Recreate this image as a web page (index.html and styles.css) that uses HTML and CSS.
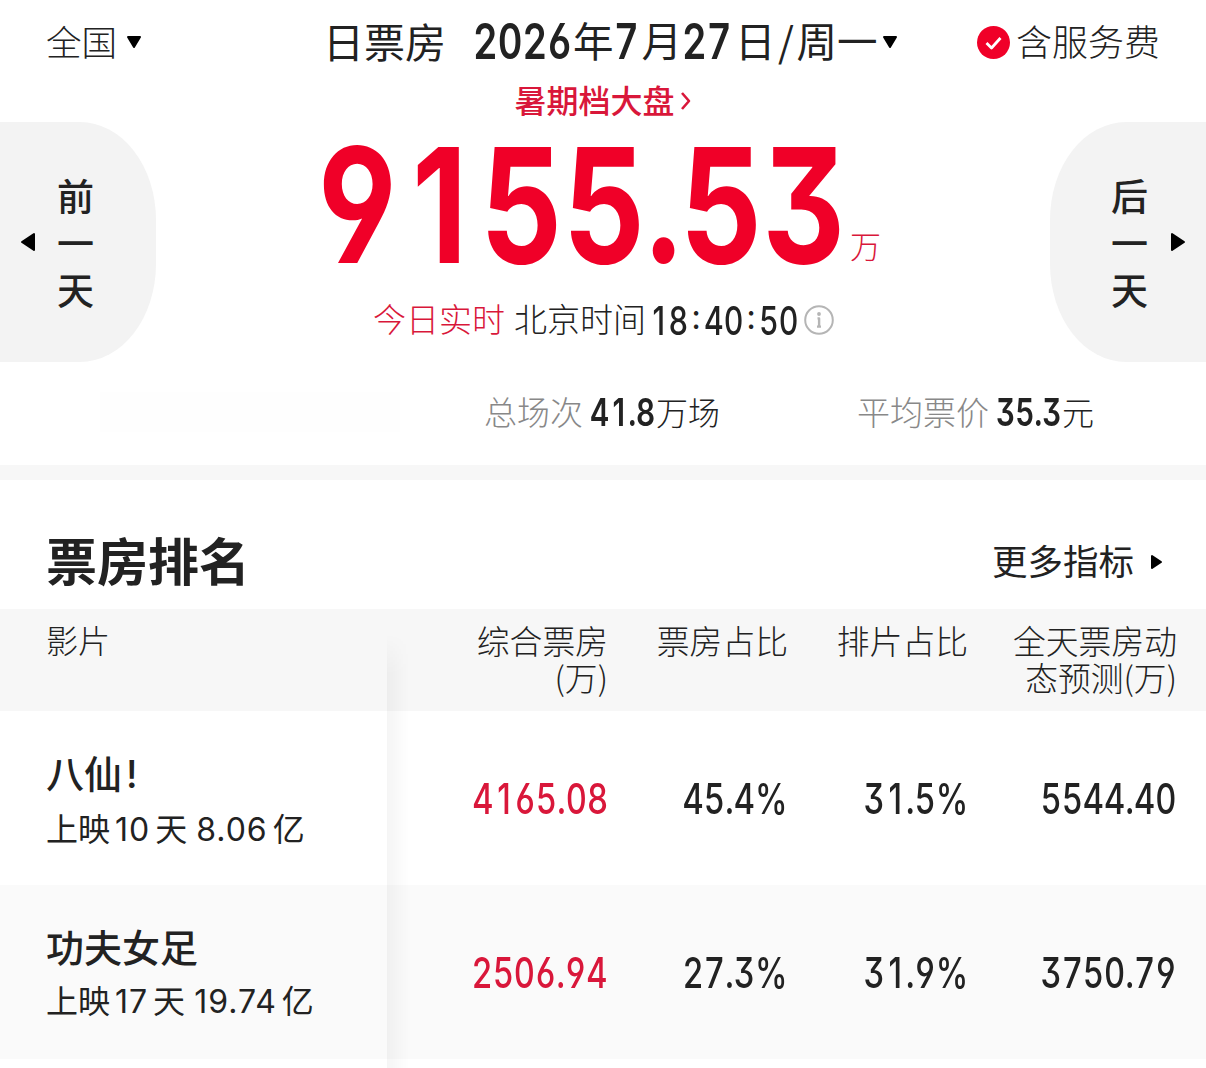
FILE: index.html
```html
<!DOCTYPE html>
<html lang="zh-CN">
<head>
  <meta charset="UTF-8">
  <meta name="viewport" content="width=device-width, initial-scale=1.0">
  <title>日票房</title>
  <link rel="stylesheet" href="styles.css">
</head>
<body>
  <header class="topbar">
    <div class="region"><span>全国</span><svg class="caret" width="16" height="13" viewBox="0 0 16 13"><path d="M2 1h12l-6 10z"/></svg></div>
    <h1 class="date">
      <span class="date-label">日票房</span>
      <span class="num year">2026</span><span>年</span><span class="num month">7</span><span>月</span><span class="num day">27</span><span>日</span><span class="slash">/</span><span>周一</span><svg class="caret" width="16" height="13" viewBox="0 0 16 13"><path d="M2 1h12l-6 10z"/></svg>
    </h1>
    <div class="fee">
      <svg width="33" height="33" viewBox="0 0 33 33"><circle cx="16.5" cy="16.5" r="16.5" fill="#f00028"/><path d="M9.5 17l5 5 9-10" fill="none" stroke="#fff" stroke-width="2.8"/></svg>
      <span>含服务费</span>
    </div>
  </header>

  <div class="season">
    <span>暑期档大盘</span>
    <svg width="12" height="20" viewBox="0 0 12 20"><path d="M2 2l7 8-7 8" fill="none" stroke="#d9173a" stroke-width="2.6"/></svg>
  </div>

  <section class="hero">
    <div class="day-tab prev">
      <svg width="16" height="20" viewBox="0 0 16 20"><path d="M14 2v16L2 10z"/></svg>
      <div class="day-text"><span>前</span><span>一</span><span>天</span></div>
    </div>
    <div class="total">
      <div class="amount"><span class="num amount-value">9<i>1</i>55.53</span><span class="unit">万</span></div>
      <div class="clock">
        <span class="live">今日实时</span>
        <span class="beijing">北京时间</span>
        <span class="num hh"><i>1</i>8</span><span class="colon">:</span><span class="num hh">40</span><span class="colon">:</span><span class="num hh">50</span>
        <svg class="info" width="30" height="30" viewBox="0 0 30 30"><circle cx="15" cy="15" r="13.8" fill="none" stroke="#b5b5b5" stroke-width="2"/><circle cx="15" cy="9" r="1.9" fill="#b5b5b5"/><path d="M13.5 13.4h1.6v8M13 21.6h4" fill="none" stroke="#b5b5b5" stroke-width="2.4"/></svg>
      </div>
    </div>
    <div class="day-tab next">
      <div class="day-text"><span>后</span><span>一</span><span>天</span></div>
      <svg width="16" height="20" viewBox="0 0 16 20"><path d="M2 2v16l12-8z"/></svg>
    </div>
  </section>

  <section class="stats">
    <div class="stat-blank"></div>
    <div class="stat"><span class="stat-label">总场次</span><span class="num stat-num">4<i>1</i>.8</span><span>万场</span></div>
    <div class="stat"><span class="stat-label">平均票价</span><span class="num stat-num">35.3</span><span>元</span></div>
  </section>

  <section class="rank">
    <div class="rank-head">
      <h2>票房排名</h2>
      <div class="more"><span>更多指标</span><svg width="13" height="16" viewBox="0 0 13 16"><path d="M2 2v12l9-6z"/></svg></div>
    </div>
    <div class="table">
      <div class="row row-head">
        <div class="film">影片</div>
        <div>综合票房<br>(万)</div>
        <div>票房占比</div>
        <div>排片占比</div>
        <div>全天票房动<br>态预测(万)</div>
      </div>
      <div class="row">
        <div class="film">
          <div class="name">八仙<span class="bang">!</span></div>
          <div class="info-line">上映<b>10</b>天 <b class="gross">8.06</b>亿</div>
        </div>
        <div class="cell red"><span class="num">4<i>1</i>65.08</span></div>
        <div class="cell"><span class="num">45.4%</span></div>
        <div class="cell"><span class="num">3<i>1</i>.5%</span></div>
        <div class="cell"><span class="num">5544.40</span></div>
      </div>
      <div class="row row-alt">
        <div class="film">
          <div class="name">功夫女足</div>
          <div class="info-line">上映<b>17</b>天 <b class="gross">19.74</b>亿</div>
        </div>
        <div class="cell red"><span class="num">2506.94</span></div>
        <div class="cell"><span class="num">27.3%</span></div>
        <div class="cell"><span class="num">3<i>1</i>.9%</span></div>
        <div class="cell"><span class="num">3750.79</span></div>
      </div>
      <div class="edge-shadow"></div>
    </div>
  </section>
</body>
</html>
```
FILE: styles.css
```css
* {
  box-sizing: border-box;
}

body {
  margin: 0;
  height: 1068px;
  overflow: hidden;
  background: #fff;
  color: #222;
  font-family: "Noto Sans CJK SC", sans-serif;
}

h1, h2 {
  margin: 0;
  font-weight: 400;
}

svg {
  display: block;
  flex: none;
}

path {
  stroke-linejoin: round;
}

.caret path, .day-tab path, .more path {
  fill: #000;
  stroke: #000;
  stroke-width: 2;
}

/* condensed figures: the width is the drawn width, the glyphs are squeezed into it */
.num {
  display: inline-block;
  font-family: Inter, sans-serif;
  font-weight: 600;
  font-kerning: none;
  font-feature-settings: "tnum", "cv03", "cv04", "cv09"; /* straight 6 and 9, flat-top 3 */
  white-space: nowrap;
  transform: scaleX(0.78);
  transform-origin: left center;
}

/* plain one without a foot, kept as wide as the other figures */
.num i {
  display: inline-block;
  width: 0.64em;
  font-style: normal;
  font-feature-settings: normal;
  text-align: center;
}

.topbar {
  display: grid;
  grid-template-columns: 277px 1fr auto;
  align-items: center;
  height: 84px;
  padding: 0 46px;
}

.region {
  display: flex;
  align-items: center;
  font-size: 35.5px;
  font-weight: 300;
}

.region .caret {
  margin-left: 9px;
}

.date {
  display: flex;
  align-items: center;
  font-size: 40.5px;
  line-height: 60px;
}

.date > span:not(.num), .region span, .fee span, .season span, .more span {
  padding-bottom: 4px;
}

.date .num {
  font-size: 49px;
}

.date > .date-label {
  margin-right: 27px;
  font-size: 41px;
}

.year {
  width: 100px;
}

.month {
  width: 28px;
}

.day {
  width: 53px;
}

.slash {
  width: 21px;
  text-align: center;
}

.date .caret {
  margin-left: 4px;
}

.fee {
  display: flex;
  align-items: center;
  gap: 6px;
  font-size: 36px;
  font-weight: 300;
}

.season {
  display: flex;
  justify-content: center;
  align-items: center;
  gap: 5px;
  height: 38px;
  padding-bottom: 4px;
  color: #d9173a;
  font-size: 32px;
  font-weight: 500;
  line-height: 34px;
}

.hero {
  display: grid;
  grid-template-columns: 156px 1fr 156px;
  height: 240px;
}

.day-tab {
  display: flex;
  align-items: center;
  background: #f3f3f3;
}

.prev {
  gap: 21px;
  padding-left: 20px;
  border-radius: 0 76px 76px 0 / 0 98px 98px 0;
}

.next {
  justify-content: flex-end;
  gap: 22px;
  padding-right: 20px;
  border-radius: 76px 0 0 76px / 98px 0 0 98px;
}

.day-text {
  display: flex;
  flex-direction: column;
  font-size: 37px;
  font-weight: 500;
  line-height: 47px;
}

.total {
  padding-left: 160px;
}

.amount {
  display: flex;
  align-items: flex-start;
  height: 170px;
  color: #f00028;
}

.amount-value {
  width: 534px;
  font-size: 160px;
  font-weight: 700;
  line-height: 167px;
  transform: scaleX(0.8);
}

.unit {
  margin-top: 100px;
  color: #d9173a;
  font-size: 31px;
  font-weight: 300;
  line-height: 46px;
}

.clock {
  display: flex;
  align-items: center;
  height: 56px;
  margin-left: 57px;
  font-size: 33px;
  font-weight: 300;
}

.live {
  color: #d9173a;
  margin-right: 9px;
}

.live, .beijing {
  padding-bottom: 4px;
}

.beijing {
  margin-right: 3px;
}

.clock .num {
  font-size: 39px;
  font-weight: 500;
}

.hh {
  width: 39px;
}

.colon {
  width: 16px;
  padding-bottom: 10px;
  text-align: center;
  font-weight: 400;
}

.info {
  margin-left: 6px;
}

.stats {
  display: grid;
  grid-template-columns: 384px 373px auto;
  align-items: center;
  height: 118px;
  padding: 0 0 3px 100px;
  border-bottom: 15px solid #f7f7f7;
  font-size: 32px;
  font-weight: 300;
}

.stat-blank {
  width: 300px;
  height: 40px;
  background: #fefefe;
}

.stat {
  display: flex;
  align-items: center;
}

.stat > span:not(.num) {
  padding-bottom: 3px;
}

.stat-label {
  margin-right: 7px;
  color: #888;
  font-size: 33px;
}

.stat-num {
  width: 66px;
  font-size: 38px;
}

.rank-head {
  display: flex;
  justify-content: space-between;
  align-items: center;
  height: 129px;
  padding: 34px 43px 0 46px;
}

.rank-head h2 {
  padding-bottom: 5px;
  font-size: 51px;
  font-weight: 700;
}

.more {
  display: flex;
  align-items: center;
  gap: 16px;
  font-size: 35.5px;
}

.table {
  position: relative;
  height: 459px;
}

.row {
  display: grid;
  grid-template-columns: 387px 221px 180px 180px 209px;
  height: 174px;
  text-align: right;
}

.row-alt {
  background: #fafafa;
}

.row-head {
  height: 102px;
  padding-top: 12px;
  background: #f7f7f7;
  font-size: 32.8px;
  font-weight: 300;
  line-height: 37px;
}

.film {
  padding-left: 46px;
  text-align: left;
}

.row-head .film {
  font-size: 32px;
}

.name {
  margin-top: 34px;
  font-size: 38px;
  font-weight: 500;
  line-height: 54px;
}

.bang {
  margin-left: 4px;
  font-family: Inter, sans-serif;
}

.info-line {
  font-size: 32px;
  line-height: 52px;
}

.info-line b {
  margin: 0 5px 0 5px;
  font-family: Inter, sans-serif;
  font-weight: 400;
  letter-spacing: 0.03em;
}

.info-line .gross {
  margin-left: 2px;
}

.cell {
  display: flex;
  justify-content: flex-end;
  align-items: center;
}

.cell .num {
  font-size: 42px;
  font-weight: 500;
  transform-origin: right center;
}

.red {
  color: #d9173a;
}

.edge-shadow {
  position: absolute;
  top: 25px;
  bottom: 0;
  left: 387px;
  width: 22px;
  background: linear-gradient(to right, rgba(0, 0, 0, 0.04), rgba(0, 0, 0, 0));
  -webkit-mask-image: linear-gradient(to bottom, transparent, #000 40px);
  mask-image: linear-gradient(to bottom, transparent, #000 40px);
}
```
